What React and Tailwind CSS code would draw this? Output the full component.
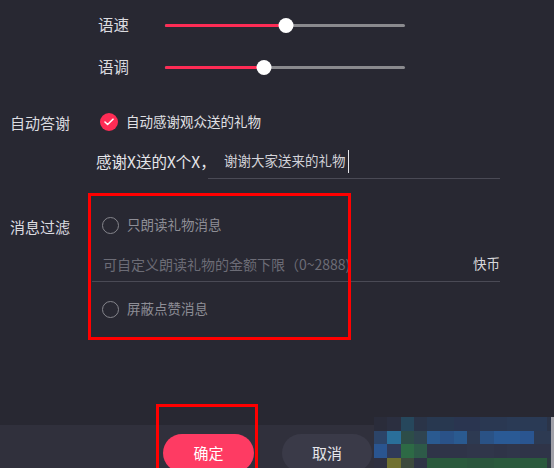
import React from "react";

// 4 rows x 14 columns of blurred blocks in the bottom-right corner
const mosaic = [
  ["#2a2c3a", "#2b2f40", "#26475c", "#2a3448", "#283850", "#283850", "#2a3550", "#2a3550", "#2a3852", "#2a3852", "#2a3a55", "#2a3a55", "#2a3a55", "#2b3448"],
  ["#2c4468", "#2a6f9a", "#2d4d48", "#2f4450", "#2a5a90", "#2a5288", "#2a5a90", "#2d3a52", "#2a5285", "#2a5a95", "#2a5a95", "#2a5590", "#2d3a52", "#2d3a52"],
  ["#2a5590", "#303a58", "#2d6a45", "#2d5a48", "#2f3448", "#2f3448", "#2f3448", "#30364a", "#30364a", "#2f3448", "#30364a", "#2f3448", "#2f3448", "#2f3448"],
  ["#2f3040", "#707030", "#3d4a3d", "#2f3446", "#2a5a3d", "#2a5a3d", "#2a5a3d", "#2a563d", "#2a563d", "#2a5a3d", "#2a5a3d", "#2a5a3d", "#2a5a3d", "#2d3a40"],
];

function Slider({ value }) {
  return (
    <div className="relative flex h-[15px] w-[240px] items-center">
      <div className="h-[3px] w-full rounded-full bg-[#8a8a8e]" />
      <div className="absolute left-0 h-[3px] rounded-full bg-[#fe2c55]" style={{ width: value }} />
      <div
        className="absolute h-[15px] w-[15px] -translate-x-1/2 rounded-full bg-white"
        style={{ left: value }}
      />
    </div>
  );
}

function Radio({ label }) {
  return (
    <div className="flex items-center">
      <span className="h-[17px] w-[17px] rounded-full border-[1.5px] border-[#85858c]" />
      <span className="ml-[8px] text-[13.5px] leading-none text-[#8e8e96]">{label}</span>
    </div>
  );
}

export default function App() {
  return (
    <div className="relative flex h-[468px] w-[554px] flex-col overflow-hidden bg-[#282832] font-['Noto_Sans_CJK_SC',sans-serif] text-[#dcdce0]">
      <div className="flex-1 pl-[10px]">
        {/* voice sliders */}
        <div className="pl-[88px] pt-[4px]">
          <div className="flex h-[42px] items-center">
            <span className="w-[67px] text-[15.5px] leading-none">语速</span>
            <Slider value={121} />
          </div>
          <div className="flex h-[42px] items-center">
            <span className="w-[67px] text-[15.5px] leading-none">语调</span>
            <Slider value={99} />
          </div>
        </div>

        {/* auto thanks */}
        <div className="mt-[20px] flex h-[28px] items-center">
          <span className="w-[90px] text-[15px] leading-none">自动答谢</span>
          <span className="flex h-[18px] w-[18px] items-center justify-center rounded-full bg-[#fe2c55]">
            <svg width="10" height="8" viewBox="0 0 10 8" fill="none">
              <path d="M1 4l2.6 2.5L9 1.2" stroke="#fff" strokeWidth="1.6" strokeLinecap="round" strokeLinejoin="round" />
            </svg>
          </span>
          <span className="ml-[8px] text-[13.5px] leading-none text-[#e0e0e4]">自动感谢观众送的礼物</span>
        </div>

        <div className="mt-[10px] flex h-[33px] pl-[86px] pr-[54px]">
          <span className="flex w-[112px] items-center whitespace-nowrap pb-[2px] text-[15.5px] leading-none text-[#e6e6ea]">
            感谢X送的X个X，
          </span>
          <span className="flex flex-1 items-center border-b border-[#4a4a55] pb-[2px] pl-[16px]">
            <span className="text-[13.5px] leading-none text-[#d2d2d8]">谢谢大家送来的礼物</span>
            <span className="ml-[2px] h-[23px] w-px bg-[#e6e6ea]" />
          </span>
        </div>

        {/* message filter */}
        <div className="mt-[33px] flex h-[26px] items-center">
          <span className="w-[92px] pt-[3px] text-[15px] leading-none">消息过滤</span>
          <Radio label="只朗读礼物消息" />
        </div>
        <div className="ml-[82px] mr-[54px] mt-[9px] flex h-[35px] items-center justify-between border-b border-[#4a4a55] pl-[11px]">
          <span className="text-[14px] leading-none text-[#6c6c76]">可自定义朗读礼物的金额下限（0~2888)</span>
          <span className="text-[13.5px] leading-none text-[#d8d8dc]">快币</span>
        </div>
        <div className="ml-[92px] mt-[14px] flex h-[26px] items-center">
          <Radio label="屏蔽点赞消息" />
        </div>
      </div>

      {/* footer buttons */}
      <div className="flex h-[43px] gap-[28px] bg-[#30303c] pl-[163px] pt-[9px]">
        <button className="h-[38px] w-[91px] rounded-full bg-[#fe3b63] text-[15px] text-white">确定</button>
        <button className="h-[38px] w-[90px] rounded-full bg-[#3a3a48] text-[15px] text-[#e6e6ea]">取消</button>
      </div>

      {/* highlight frames */}
      <div className="pointer-events-none absolute left-[88px] top-[193px] h-[147px] w-[263px] border-[3px] border-[#ff0000]" />
      <div className="pointer-events-none absolute left-[156px] top-[404px] h-[70px] w-[102px] border-[3px] border-[#ff0000]" />

      {/* blurred corner */}
      <div className="absolute left-[374px] top-[417px] grid grid-cols-[repeat(14,13.3px)] auto-rows-[13.5px]">
        {mosaic.flat().map((c, i) => (
          <div key={i} style={{ backgroundColor: c }} />
        ))}
      </div>
      <div className="absolute left-[551px] top-[417px] h-[51px] w-[3px] bg-[#a0a0a8]" />
    </div>
  );
}
